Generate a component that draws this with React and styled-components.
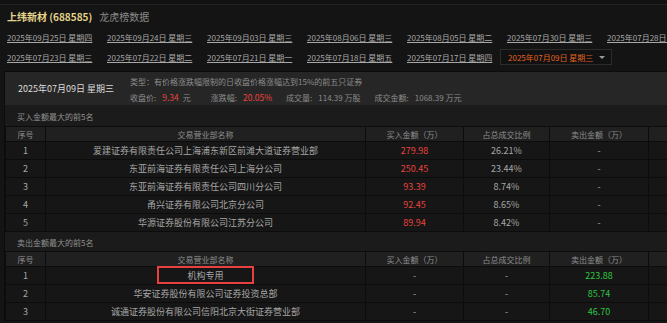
import React from "react";
import styled, { createGlobalStyle } from "styled-components";

const GlobalStyle = createGlobalStyle`
  html, body {
    margin: 0;
    padding: 0;
    background: #141414;
    overflow: hidden;
  }
  body {
    font-family: "Noto Sans CJK SC", "Noto Sans", sans-serif;
    color: #aaa;
  }
`;

const dateRows = [
  [
    "2025年09月25日 星期四",
    "2025年09月24日 星期三",
    "2025年09月03日 星期三",
    "2025年08月06日 星期三",
    "2025年08月05日 星期二",
    "2025年07月30日 星期三",
    "2025年07月28日 星期一",
  ],
  [
    "2025年07月23日 星期三",
    "2025年07月22日 星期二",
    "2025年07月21日 星期一",
    "2025年07月18日 星期五",
    "2025年07月17日 星期四",
  ],
];

const buyRows = [
  ["1", "爱建证券有限责任公司上海浦东新区前滩大道证券营业部", "279.98", "26.21%", "-"],
  ["2", "东亚前海证券有限责任公司上海分公司", "250.45", "23.44%", "-"],
  ["3", "东亚前海证券有限责任公司四川分公司", "93.39", "8.74%", "-"],
  ["4", "甬兴证券有限公司北京分公司", "92.45", "8.65%", "-"],
  ["5", "华源证券股份有限公司江苏分公司", "89.94", "8.42%", "-"],
];

const sellRows = [
  ["1", "机构专用", "-", "-", "223.88", true],
  ["2", "华安证券股份有限公司证券投资总部", "-", "-", "85.74"],
  ["3", "诚通证券股份有限公司信阳北京大街证券营业部", "-", "-", "46.70"],
];

function StockBoard() {
  return (
    <>
      <GlobalStyle />
      <TopStrip />
      <Head>
        <Title>上纬新材 (688585)</Title>
        <SubTitle>龙虎榜数据</SubTitle>
      </Head>
      <DateRow>
        {dateRows[0].map((d) => (
          <DateLink key={d}>{d}</DateLink>
        ))}
      </DateRow>
      <DateRow>
        {dateRows[1].map((d) => (
          <DateLink key={d}>{d}</DateLink>
        ))}
        <Select>
          <span>2025年07月09日 星期三</span>
          <Caret />
        </Select>
      </DateRow>

      <Panel>
        <Summary>
          <SummaryDate>2025年07月09日 星期三</SummaryDate>
          <Info>
            <InfoLine>类型：有价格涨跌幅限制的日收盘价格涨幅达到15%的前五只证券</InfoLine>
            <InfoLine>
              <Field>收盘价:</Field>
              <Red>9.34</Red>
              <Unit>元</Unit>
              <Field>涨跌幅:</Field>
              <Red>20.05%</Red>
              <Field>成交量:</Field>
              <Plain>114.39 万股</Plain>
              <Field>成交金额:</Field>
              <Plain>1068.39 万元</Plain>
            </InfoLine>
          </Info>
        </Summary>

        <SectionLabel>买入金额最大的前5名</SectionLabel>
        <DataTable>
          <Cols />
          <thead>
            <HeadRow />
          </thead>
          <tbody>
            {buyRows.map((r) => (
              <tr key={r[0]}>
                <Td>{r[0]}</Td>
                <Td>{r[1]}</Td>
                <Td $color="#e8433d">{r[2]}</Td>
                <Td>{r[3]}</Td>
                <Td>{r[4]}</Td>
                <Td />
              </tr>
            ))}
          </tbody>
        </DataTable>

        <SectionLabel $h={19}>卖出金额最大的前5名</SectionLabel>
        <DataTable>
          <Cols />
          <thead>
            <HeadRow />
          </thead>
          <tbody>
            {sellRows.map((r) => (
              <tr key={r[0]}>
                <Td>{r[0]}</Td>
                <Td>{r[5] ? <Marked>{r[1]}</Marked> : r[1]}</Td>
                <Td>{r[2]}</Td>
                <Td>{r[3]}</Td>
                <Td $color="#2fc443">{r[4]}</Td>
                <Td />
              </tr>
            ))}
          </tbody>
        </DataTable>
      </Panel>
    </>
  );
}

function Cols() {
  return (
    <colgroup>
      <col style={{ width: 40 }} />
      <col style={{ width: 320 }} />
      <col style={{ width: 98 }} />
      <col style={{ width: 86 }} />
      <col style={{ width: 99 }} />
      <col style={{ width: 100 }} />
    </colgroup>
  );
}

function HeadRow() {
  return (
    <tr>
      <Th>序号</Th>
      <Th>交易营业部名称</Th>
      <Th>买入金额（万）</Th>
      <Th>占总成交比例</Th>
      <Th>卖出金额（万）</Th>
      <Th />
    </tr>
  );
}

export default StockBoard;

const TopStrip = styled.div`
  height: 4px;
  background: #121212;
  border-bottom: 1px solid #222;
`;

const Head = styled.div`
  display: flex;
  align-items: center;
  gap: 7px;
  height: 22px;
  padding-left: 7px;
`;

const Title = styled.span`
  font-size: 10px;
  font-weight: 700;
  color: #e6d58c;
`;

const SubTitle = styled.span`
  font-size: 10px;
  color: #8a8a8a;
`;

const DateRow = styled.div`
  display: flex;
  align-items: center;
  height: 20px;
  padding-left: 7px;
  white-space: nowrap;
`;

const DateLink = styled.a`
  flex: 0 0 100px;
  font-size: 8px;
  color: #a8a8a8;
  text-decoration: underline;
  text-underline-offset: 1px;
`;

const Select = styled.div`
  display: flex;
  align-items: center;
  justify-content: space-between;
  box-sizing: border-box;
  width: 112px;
  height: 16px;
  margin-left: -7px;
  padding: 0 6px 0 7px;
  background: #111;
  border: 1px solid #2c2c2c;
  font-size: 8px;
  color: #e2621f;
`;

const Caret = styled.span`
  width: 0;
  height: 0;
  border-left: 3px solid transparent;
  border-right: 3px solid transparent;
  border-top: 3px solid #999;
`;

const Panel = styled.div`
  margin: 4px 0 0 4px;
  width: 760px;
  background: #1b1b1b;
  border-left: 1px solid #0c0c0c;
  border-top: 1px solid #0c0c0c;
`;

const Summary = styled.div`
  display: flex;
  height: 33px;
  background: #262626;
`;

const SummaryDate = styled.div`
  flex: 0 0 112px;
  padding-left: 13px;
  display: flex;
  align-items: center;
  font-size: 9px;
  color: #dcdcdc;
`;

const Info = styled.div`
  padding-top: 1px;
  font-size: 8px;
  color: #8c8c8c;
`;

const InfoLine = styled.div`
  display: flex;
  align-items: center;
  height: 16px;
  white-space: nowrap;
`;

const Field = styled.span`
  margin-right: 6px;
  &:not(:first-child) {
    margin-left: 14px;
  }
`;

const Red = styled.span`
  color: #e8433d;
  font-size: 8.5px;
`;

const Unit = styled.span`
  margin-left: 4px;
  margin-right: 6px;
`;

const Plain = styled.span`
  color: #8c8c8c;
`;

const SectionLabel = styled.div`
  display: flex;
  align-items: center;
  height: ${(p) => p.$h || 21}px;
  padding: 1px 0 0 12px;
  box-sizing: border-box;
  font-size: 8px;
  color: #929292;
`;

const DataTable = styled.table`
  border-collapse: collapse;
  table-layout: fixed;
  width: 743px;
`;

const Th = styled.th`
  height: 14px;
  padding: 0;
  background: #202020;
  border: 1px solid #0c0c0c;
  font-size: 8px;
  font-weight: 400;
  color: #8f8f8f;
  text-align: center;
`;

const Td = styled.td`
  height: 17px;
  padding: 0;
  background: #161616;
  border: 1px solid #0c0c0c;
  font-size: 9px;
  color: ${(p) => p.$color || "#a6a6a6"};
  text-align: center;
  white-space: nowrap;
`;

const Marked = styled.span`
  display: inline-flex;
  align-items: center;
  justify-content: center;
  box-sizing: border-box;
  width: 97px;
  height: 18px;
  margin: -2px 0 -1px;
  border: 2px solid #e8403f;
  vertical-align: middle;
`;
